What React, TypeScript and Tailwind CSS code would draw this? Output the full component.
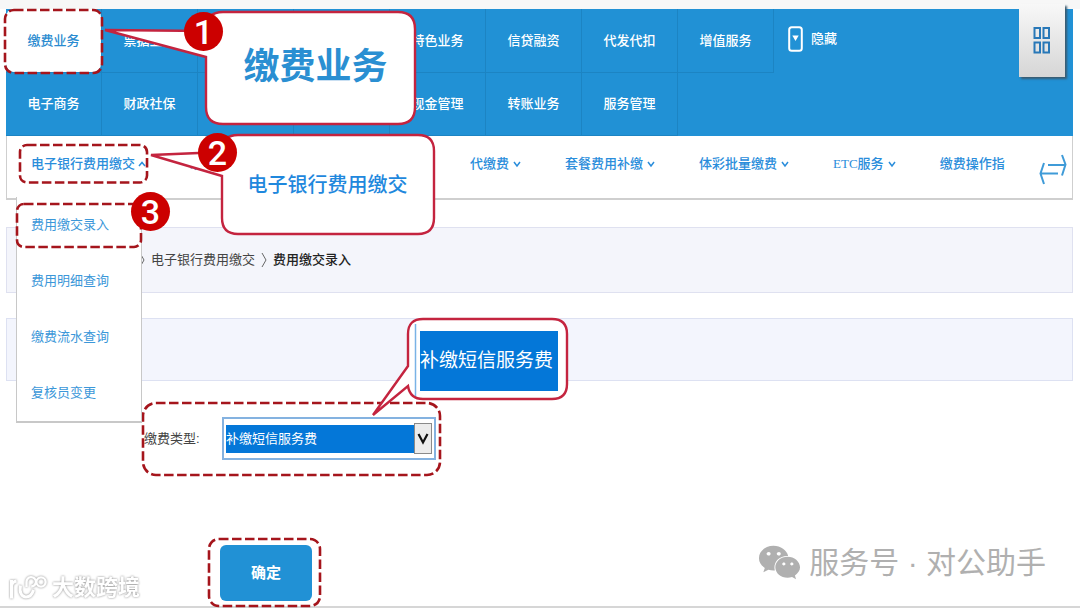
import type { ReactNode } from "react";
import { FaWeixin } from "react-icons/fa";

const SANS = "font-['Liberation_Sans','Noto_Sans_CJK_SC',sans-serif]";
const SERIF = "font-['Liberation_Serif','Noto_Sans_CJK_SC',serif]";

// empty entries are menu columns hidden behind the first callout
const NAV_TOP = ["缴费业务", "票据业务", "", "", "特色业务", "信贷融资", "代发代扣", "增值服务"];
const NAV_BOTTOM = ["电子商务", "财政社保", "", "", "现金管理", "转账业务", "服务管理"];
const SUB_NAV = ["代缴费", "套餐费用补缴", "体彩批量缴费", "ETC服务"];
const MENU = ["费用缴交录入", "费用明细查询", "缴费流水查询", "复核员变更"];

function DashedBox({ className, radius = 10 }: { className: string; radius?: number }) {
  return (
    <span className={`absolute pointer-events-none ${className}`}>
      <svg className="block w-full h-full overflow-visible" aria-hidden="true">
        <rect
          width="100%"
          height="100%"
          rx={radius}
          fill="none"
          stroke="#a5151c"
          strokeWidth="2.6"
          strokeDasharray="9.5 3.5"
        />
      </svg>
    </span>
  );
}

function Badge({ className, children }: { className: string; children: ReactNode }) {
  return (
    <span
      className={`absolute z-30 flex size-[39px] items-center justify-center rounded-full bg-[#cc0000] font-['Roboto',sans-serif] text-[34px] font-medium leading-none text-white ${className}`}
    >
      {children}
    </span>
  );
}

function Caret({ up = false }: { up?: boolean }) {
  return (
    <svg width="8" height="8" viewBox="0 0 8 8" fill="none" stroke="currentColor" strokeWidth="1.5" aria-hidden="true">
      <path d={up ? "M1 6 4 2.5 7 6" : "M1 2 4 6 7 2"} />
    </svg>
  );
}

function Crumb() {
  return (
    <svg width="6" height="16" viewBox="0 0 6 16" fill="none" stroke="#666" strokeWidth="1" aria-hidden="true">
      <path d="M1 1 5 8 1 15" />
    </svg>
  );
}

function NavCell({ label, active = false }: { label: string; active?: boolean }) {
  if (!label) {
    return <li className="w-24 border-r border-b border-[#1c84c3]" />;
  }
  return (
    <li className="relative w-24 border-r border-b border-[#1c84c3]">
      <button
        type="button"
        className={
          active
            ? "h-full w-full rounded-lg bg-white text-[13px] font-medium text-[#2a8bd0]"
            : "h-full w-full text-[13px] font-medium text-white"
        }
      >
        {label}
      </button>
      {active && <DashedBox className="-left-px top-px -right-px -bottom-px" radius={9} />}
    </li>
  );
}

function Header() {
  return (
    <nav className="relative bg-[#2191d5]">
      <div className="flex h-16 items-stretch">
        <ul className="flex">
          {NAV_TOP.map((label, i) => (
            <NavCell key={i} label={label} active={i === 0} />
          ))}
        </ul>
        <button type="button" className="mb-1 ml-[14px] flex items-center gap-2 self-center text-[13px] font-medium text-white">
          <svg width="15" height="26" viewBox="0 0 15 26" fill="none" aria-hidden="true">
            <rect x="1.2" y="1.2" width="12.6" height="23.6" rx="2.5" stroke="#fff" strokeWidth="2" />
            <path d="M4.3 9.5h6.4L7.5 15z" fill="#fff" />
          </svg>
          隐藏
        </button>
      </div>
      <ul className="flex h-[63px]">
        {NAV_BOTTOM.map((label, i) => (
          <NavCell key={i} label={label} />
        ))}
      </ul>
      <button
        type="button"
        aria-label="grid"
        className="absolute -top-[5px] right-2 flex h-[73px] w-[46px] items-center justify-center bg-linear-to-b from-[#f8f8f8] to-[#d6d6d6] shadow-[2px_2px_2px_#3a5a70]"
      >
        <svg width="18" height="29" viewBox="0 0 18 29" fill="none" stroke="#2878b8" strokeWidth="2" aria-hidden="true">
          <rect x="1.5" y="2" width="5.5" height="10" />
          <rect x="10.5" y="2" width="5.5" height="10" />
          <rect x="1.5" y="16.5" width="5.5" height="10" />
          <rect x="10.5" y="16.5" width="5.5" height="10" />
        </svg>
      </button>
    </nav>
  );
}

function SubNav() {
  return (
    <div
      className={`relative flex h-16 items-start border border-t-0 border-b-2 border-[#cfcfcf] bg-white pl-6 pr-1 pt-[18px] text-[13px] font-medium text-[#2a8ddb] ${SERIF}`}
    >
      <div className="relative flex items-center gap-[3px]">
        <button type="button">电子银行费用缴交</button>
        <Caret up />
        <DashedBox className="-left-[11px] -top-[9px] -right-px -bottom-[9px]" radius={7} />
      </div>
      <button type="button" className="ml-11 w-[236px] text-left">
        现
      </button>
      <ul className="ml-11 flex gap-11">
        {SUB_NAV.map((label) => (
          <li key={label}>
            <button type="button" className="flex items-center gap-1">
              {label}
              <Caret />
            </button>
          </li>
        ))}
        <li>
          <button type="button">缴费操作指</button>
        </li>
      </ul>
      <button type="button" aria-label="scroll" className="ml-auto">
        <svg width="30" height="32" viewBox="0 0 30 32" fill="none" stroke="#3f9bd8" strokeWidth="2" aria-hidden="true">
          <path d="M10 11h17M24 1l3.500 9.500L24 21.500" />
          <path d="M20 19.500H3M6 9 2.500 19.500 6 30" />
        </svg>
      </button>

      {/* open submenu */}
      <ul className="absolute left-[9px] top-[61px] z-10 w-[126px] border border-t-0 border-[#c8c8c8] border-b-2 bg-white text-[#3b97d9]">
        {MENU.map((label, i) => (
          <li key={label} className="relative">
            <button type="button" className="h-14 w-full pl-3.5 text-left font-normal">
              {label}
            </button>
            {i === 0 && <DashedBox className="left-0 top-[7px] right-0 bottom-[6px]" radius={7} />}
          </li>
        ))}
      </ul>
    </div>
  );
}

function Callouts() {
  return (
    <div className="pointer-events-none">
      <div className="absolute left-[101px] top-[10px] z-20">
        <svg width="316" height="117" viewBox="0 0 316 117" className="block" aria-hidden="true">
          <path
            d="M4 20 105 21V19Q105 2 122 2H297Q314 2 314 19V97Q314 114 297 114H122Q105 114 105 97V47Z"
            fill="#fff"
            stroke="#c4243f"
            strokeWidth="2.4"
          />
        </svg>
        <p className="absolute inset-y-0 left-[105px] right-0 flex items-center justify-center pb-1 pl-2 text-4xl font-semibold text-[#2a8fd2]">
          缴费业务
        </p>
      </div>
      <div className="absolute left-[147px] top-[133px] z-20">
        <svg width="290" height="104" viewBox="0 0 290 104" className="block" aria-hidden="true">
          <path
            d="M4 22 75 19V18Q75 2 91 2H271Q287 2 287 18V85Q287 101 271 101H91Q75 101 75 85V43Z"
            fill="#fff"
            stroke="#c4243f"
            strokeWidth="2.4"
          />
        </svg>
        <p className="absolute inset-y-0 left-[75px] right-0 flex items-center justify-center pr-1 text-xl font-medium text-[#1f88dd]">
          电子银行费用缴交
        </p>
      </div>
      <div className="absolute left-[370px] top-[317px] z-20">
        <svg width="200" height="102" viewBox="0 0 200 102" className="block" aria-hidden="true">
          <path
            d="M3 98 38 49V17Q38 2 53 2H182Q197 2 197 17V67Q197 82 182 82H53Q40 82 38 69Z"
            fill="#fff"
            stroke="#c4243f"
            strokeWidth="2.4"
          />
          <path d="M45.5 7V79" stroke="#79b3e6" strokeWidth="1.5" />
        </svg>
        <p className="absolute left-[50px] top-[14px] flex h-[60px] w-[138px] items-center bg-[#0477d8] text-[19px] text-white">
          补缴短信服务费
        </p>
      </div>
      <Badge className="left-[184px] top-[12px]">1</Badge>
      <Badge className="left-[198px] top-[133px]">2</Badge>
      <Badge className="left-[131px] top-[192px]">3</Badge>
    </div>
  );
}

function Watermarks() {
  return (
    <div className="pointer-events-none">
      <div className="absolute bottom-1 left-2 flex items-center gap-1 drop-shadow-[0_0_1px_#888]">
        <svg width="40" height="28" viewBox="0 0 40 28" fill="none" stroke="#fff" aria-hidden="true">
          <path d="M3.500 6V24.500M3.500 12Q4 8 8.500 7" strokeWidth="3" />
          <path d="M12.500 11.500C11 19 14 23 18 23S24 21 25.500 16" strokeWidth="3" />
          <path d="M18.500 13V8.200A4.700 4.700 0 1 1 23.200 12.500" strokeWidth="2.4" />
          <circle cx="33" cy="8" r="4.600" strokeWidth="2.4" />
        </svg>
        <span className="text-[22px] font-bold leading-7 text-white">大数跨境</span>
      </div>
      <div className="absolute bottom-[22px] right-[34px] flex items-center gap-2 text-3xl text-[#b0b0b0]">
        <FaWeixin className="size-[43px]" aria-hidden="true" />
        <span className="font-['Liberation_Sans','Noto_Sans_CJK_SC',sans-serif] leading-10">服务号 · 对公助手</span>
      </div>
    </div>
  );
}

export default function App() {
  return (
    <div className={`relative flex min-h-screen flex-col border-b-2 border-[#d6d6d6] bg-white ${SANS}`}>
      <div className="h-[9px] bg-[#f7f7f7]" />
      <main className="pl-[6px] pr-[7px]">
        <Header />
        <SubNav />

        <div className="mt-[27px] flex h-[66px] items-center gap-[6px] border border-[#dfe1f0] bg-[#f4f5fb] pl-[132px] text-[13px] text-[#444]">
          <Crumb />
          <a href="#fees">电子银行费用缴交</a>
          <Crumb />
          <span className="font-medium text-[#222]">费用缴交录入</span>
        </div>
        <div className="mt-[25px] h-[63px] border border-[#dde1f2] bg-[#f3f5fd]" />

        <form onSubmit={(e) => e.preventDefault()}>
          <div className="relative mt-9 ml-[138px] flex w-fit items-center">
            <label htmlFor="fee-type" className="w-[78px] text-[13px] text-[#444]">
              缴费类型:
            </label>
            <div className="relative flex h-[43px] w-[214px] items-center border-2 border-[#84b2e0] bg-white px-[2px]">
              <select
                id="fee-type"
                className="h-7 flex-1 appearance-none bg-[#0477d8] text-[13px] text-white outline-none"
              >
                <option>补缴短信服务费</option>
              </select>
              <span className="pointer-events-none flex h-[31px] w-[18px] items-center justify-center border border-[#8a8a8a] bg-[#ececec]">
                <svg width="12" height="13" viewBox="0 0 12 13" fill="none" stroke="#111" strokeWidth="2.2" aria-hidden="true">
                  <path d="M1.5 2 6 10.5 10.5 2" />
                </svg>
              </span>
            </div>
            <DashedBox className="-left-[1px] -top-[14px] -right-[4px] -bottom-[15px]" radius={13} />
          </div>

          <div className="relative mt-[85px] ml-[214px] w-fit">
            <button type="submit" className="block h-14 w-[92px] rounded-md bg-[#2191d5] text-[15px] font-bold text-white">
              确定
            </button>
            <DashedBox className="-left-[11px] -top-[6px] -right-[8px] -bottom-[5px]" radius={10} />
          </div>
        </form>
      </main>
      <Callouts />
      <Watermarks />
    </div>
  );
}
